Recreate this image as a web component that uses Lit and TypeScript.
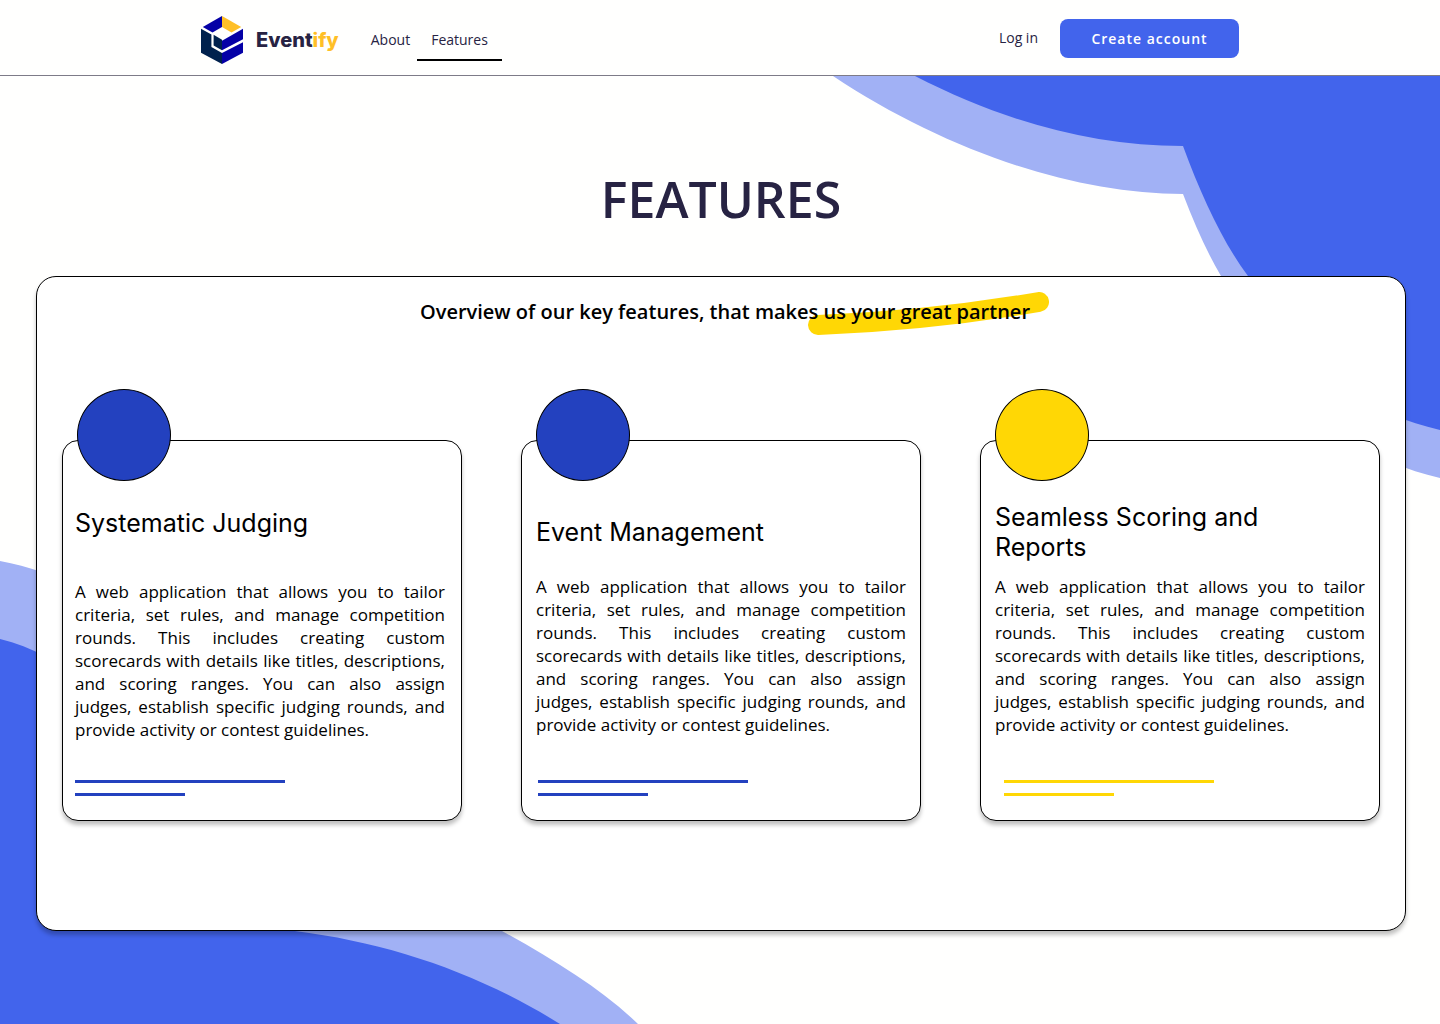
import { LitElement, html, css, svg } from "lit";
import { customElement, property } from "lit/decorators.js";
import { classMap } from "lit/directives/class-map.js";

type Accent = "blue" | "gold";

interface Feature {
  title: string;
  text: string;
  accent: Accent;
  raised: boolean;
}

const SUMMARY =
  "A web application that allows you to tailor criteria, set rules, and manage competition rounds. This includes creating custom scorecards with details like titles, descriptions, and scoring ranges. You can also assign judges, establish specific judging rounds, and provide activity or contest guidelines.";

const FEATURES: Feature[] = [
  { title: "Systematic Judging", text: SUMMARY, accent: "blue", raised: true },
  { title: "Event Management", text: SUMMARY, accent: "blue", raised: false },
  { title: "Seamless Scoring and Reports", text: SUMMARY, accent: "gold", raised: false },
];

@customElement("site-header")
class SiteHeader extends LitElement {
  static styles = css`
    :host {
      display: block;
      position: relative;
      background: #fffffe;
      border-bottom: 1px solid #7d7b88;
      color: #272343;
      font-family: "Open Sans", sans-serif;
      font-size: 14px;
    }
    .bar {
      max-width: 1038px;
      margin: 0 auto;
      height: 75px;
      display: flex;
      align-items: center;
    }
    a {
      color: inherit;
      text-decoration: none;
    }
    .brand {
      display: flex;
      align-items: center;
      gap: 13px;
      padding-top: 5px;
      font: 800 20px/24px Inter, sans-serif;
    }
    .mark {
      display: block;
      width: 42px;
      height: 48px;
    }
    .tail {
      color: #ffbf27;
    }
    nav {
      display: flex;
      align-self: flex-end;
      margin: 0 auto 14px 18px;
    }
    .link {
      padding: 0 14px 9px;
      line-height: 20px;
      border-bottom: 2px solid transparent;
    }
    .link.current {
      margin-left: -7px;
      border-color: #000;
    }
    .actions {
      display: flex;
      align-items: center;
      gap: 22px;
      padding-top: 2px;
    }
    .login {
      padding-bottom: 2px;
    }
    button {
      width: 179px;
      height: 39px;
      border: 0;
      border-radius: 8px;
      background: #4264ec;
      color: #fffffe;
      font: 600 14px/20px "Open Sans", sans-serif;
      letter-spacing: 1px;
      cursor: pointer;
    }
  `;

  render() {
    return html`
      <div class="bar">
        <a class="brand" href="#home">
          <svg class="mark" viewBox="0 0 42 48" aria-hidden="true">
            <path fill="#0500a6" d="M21 0 1.8 10.9 11.5 16.4 21 11z" />
            <path fill="#ffbf27" d="M21 0 40.2 10.9 30.5 16.4 21 11z" />
            <path fill="#00214d" d="M0 12.7 10.4 18.6V31L21 37.1V48L0 36.8z" />
            <path fill="#00214d" d="M12.6 18.8 21 23.7V34.3L12.6 29.6z" />
            <path fill="#0500a6" d="M42 12.7V23.3L21 34.3V24.7z" />
            <path fill="#0500a6" d="M42 26.3V36.8L21 48V37.1z" />
          </svg>
          <span>Event<span class="tail">ify</span></span>
        </a>
        <nav aria-label="Main">
          <a class="link" href="#about">About</a>
          <a class="link current" href="#features" aria-current="page">Features</a>
        </nav>
        <div class="actions">
          <a class="login" href="#login">Log in</a>
          <button type="button">Create account</button>
        </div>
      </div>
    `;
  }
}

@customElement("feature-card")
class FeatureCard extends LitElement {
  @property({ attribute: false }) feature!: Feature;

  static styles = css`
    :host {
      display: block;
    }
    .card {
      position: relative;
      box-sizing: border-box;
      height: 100%;
      padding: 61px 14px 24px;
      border: 1px solid #000;
      border-radius: 16px;
      background: #fff;
      box-shadow: 0 4px 4px rgba(0, 0, 0, 0.25);
    }
    .disc {
      position: absolute;
      top: -52px;
      left: 14px;
      box-sizing: border-box;
      width: 94px;
      height: 92px;
      border: 1px solid #000;
      border-radius: 50%;
      background: var(--accent);
    }
    .blue {
      --accent: #2341bf;
    }
    .gold {
      --accent: #ffd705;
    }
    h2 {
      display: flex;
      align-items: center;
      min-height: 60px;
      max-width: 300px;
      margin: 0;
      font: 400 25px/30px Inter, sans-serif;
    }
    p {
      margin: 13px 0 44px;
      font: 400 17px/23px "Open Sans", sans-serif;
      text-align: justify;
    }
    .rules {
      display: grid;
      gap: 10px;
      padding-left: 2px;
    }
    .gold .rules {
      padding-left: 9px;
    }
    .rule {
      width: 210px;
      height: 3px;
      background: var(--accent);
    }
    .short {
      width: 110px;
    }
    .raised {
      padding-left: 12px;
      padding-right: 16px;
    }
    .raised h2 {
      min-height: 42px;
    }
    .raised p {
      margin: 36px 0 39px;
    }
    .raised .rules {
      padding-left: 0;
    }
  `;

  render() {
    const { title, text, accent, raised } = this.feature;
    return html`
      <article class=${classMap({ card: true, [accent]: true, raised })}>
        <div class="disc"></div>
        <h2>${title}</h2>
        <p>${text}</p>
        <div class="rules">
          <div class="rule"></div>
          <div class="rule short"></div>
        </div>
      </article>
    `;
  }
}

const waveTop = svg`
  <path fill="#a1b1f5" d="M0 0C110 73 238 118 350 118Q369 168 388 200C445 325 515 380 607 402V0z" />
  <path fill="#4264ec" d="M82 0C170 45 258 70 350 70C369 122 391 168 415 200C465 300 530 335 607 354V0z" />
`;

const waveBottom = svg`
  <path fill="#a1b1f5" d="M0 0C150 28 230 160 257 290C350 290 430 325 502 370C556 400 603 429 638 463H0z" />
  <path fill="#4264ec" d="M0 78C110 105 170 220 210 358Q250 362 295 370C390 382 478 412 560 463H0z" />
`;

@customElement("app-root")
class AppRoot extends LitElement {
  static styles = css`
    :host {
      display: flex;
      flex-direction: column;
      position: relative;
      min-height: 100vh;
      overflow: hidden;
      background: #fffffe;
      color: #000;
    }
    .wave {
      position: absolute;
      display: block;
    }
    .wave-top {
      top: 76px;
      right: 0;
      width: 607px;
      height: 402px;
    }
    .wave-bottom {
      bottom: 0;
      left: 0;
      width: 638px;
      height: 463px;
    }
    main {
      position: relative;
      padding: 87px 34px 93px 36px;
    }
    h1 {
      margin: 0 0 41px;
      text-align: center;
      color: #272343;
      font: 600 50px/72px "Open Sans", sans-serif;
    }
    .panel {
      padding: 20px 25px 109px;
      border: 1px solid #000;
      border-radius: 20px;
      background: #fff;
      box-shadow: 0 4px 4px rgba(0, 0, 0, 0.25);
    }
    .lead {
      margin: 0 0 113px;
      padding-left: 8px;
      text-align: center;
      font: 600 20px/30px "Open Sans", sans-serif;
    }
    .phrase {
      position: relative;
      display: inline-block;
      isolation: isolate;
    }
    .marker {
      position: absolute;
      z-index: -1;
      right: -19px;
      top: -5px;
      width: 241px;
      height: 44px;
    }
    .cards {
      display: grid;
      grid-template-columns: repeat(3, minmax(0, 1fr));
      gap: 59px;
    }
  `;

  render() {
    return html`
      <svg class="wave wave-top" viewBox="0 0 607 402" aria-hidden="true">${waveTop}</svg>
      <svg class="wave wave-bottom" viewBox="0 0 638 463" aria-hidden="true">${waveBottom}</svg>
      <site-header></site-header>
      <main>
        <h1>FEATURES</h1>
        <section class="panel">
          <p class="lead">
            <span class="phrase">
              <svg class="marker" viewBox="0 0 241 44" aria-hidden="true">
                <path d="M10 33Q119 29 231 10" fill="none" stroke="#ffd705" stroke-width="20" stroke-linecap="round" />
              </svg>
              Overview of our key features, that makes us your great partner
            </span>
          </p>
          <div class="cards">
            ${FEATURES.map((f) => html`<feature-card .feature=${f}></feature-card>`)}
          </div>
        </section>
      </main>
    `;
  }
}
